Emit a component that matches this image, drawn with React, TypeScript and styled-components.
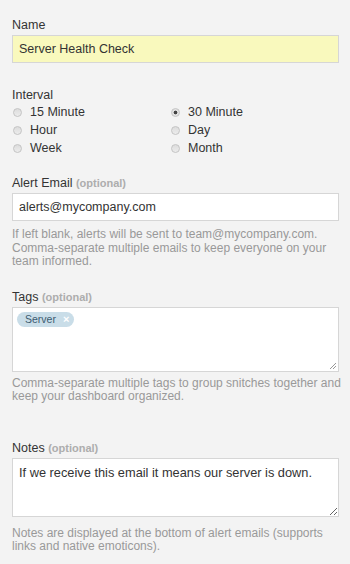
import React, { useState } from 'react';
import styled, { createGlobalStyle } from 'styled-components';

const GlobalStyle = createGlobalStyle`
html, body {
  margin: 0;
  padding: 0;
  background: #f3f3f3;
}
body {
  font-family: "Liberation Sans", Arial, sans-serif;
  color: #333;
}
`;

const intervals = ['15 Minute', '30 Minute', 'Hour', 'Day', 'Week', 'Month'];

const emailHelp = [
  'If left blank, alerts will be sent to team@mycompany.com.',
  'Comma-separate multiple emails to keep everyone on your',
  'team informed.',
];

const tagsHelp = [
  'Comma-separate multiple tags to group snitches together and',
  'keep your dashboard organized.',
];

const notesHelp = [
  'Notes are displayed at the bottom of alert emails (supports',
  'links and native emoticons).',
];

const HelpText = ({ lines, top }: { lines: string[]; top: number }) => (
  <Help $top={top}>
    {lines.map(line => (
      <HelpLine key={line}>{line}</HelpLine>
    ))}
  </Help>
);

export default function App() {
  const [interval, setInterval] = useState('30 Minute');
  const [tags, setTags] = useState(['Server']);

  return (
    <Page>
      <GlobalStyle />
      <Field>
        <Label>Name</Label>
        <TextInput $highlight defaultValue="Server Health Check" />
      </Field>

      <Field $gap={24}>
        <Label>Interval</Label>
        <RadioGrid>
          {intervals.map(name => (
            <RadioOption key={name} onClick={() => setInterval(name)}>
              <RadioDot $checked={interval === name} />
              {name}
            </RadioOption>
          ))}
        </RadioGrid>
      </Field>

      <Field $gap={18}>
        <Label>
          Alert Email <Optional>(optional)</Optional>
        </Label>
        <TextInput defaultValue="alerts@mycompany.com" />
        <HelpText lines={emailHelp} top={7} />
      </Field>

      <Field $gap={20}>
        <Label>
          Tags <Optional>(optional)</Optional>
        </Label>
        <TagBox $height={65}>
          {tags.map(tag => (
            <Tag key={tag}>
              {tag}
              <TagRemove onClick={() => setTags(tags.filter(t => t !== tag))}>×</TagRemove>
            </Tag>
          ))}
          <Grip />
        </TagBox>
        <HelpText lines={tagsHelp} top={5} />
      </Field>

      <Field $gap={36}>
        <Label>
          Notes <Optional>(optional)</Optional>
        </Label>
        <TextArea
          $height={59}
          defaultValue="If we receive this email it means our server is down."
        />
        <HelpText lines={notesHelp} top={10} />
      </Field>
    </Page>
  );
}

const Page = styled.div`
padding: 17px 11px 0 12px;
`;

const Field = styled.div<{ $gap?: number }>`
display: flex;
flex-direction: column;
margin-top: ${p => p.$gap || 0}px;
`;

const Label = styled.label`
font-size: 12.5px;
line-height: 16px;
color: #333;
margin-bottom: 2px;
`;

const Optional = styled.span`
font-size: 11px;
font-weight: bold;
color: #adadad;
`;

const TextInput = styled.input<{ $highlight?: boolean }>`
box-sizing: border-box;
height: 28px;
width: 100%;
margin: 0;
padding: 0 6px;
border: 1px solid #d6d6d6;
background: ${p => (p.$highlight ? '#f9f9bd' : '#fff')};
font-family: inherit;
font-size: 12.5px;
color: #333;
outline: none;
`;

const RadioGrid = styled.div`
display: grid;
grid-template-columns: 158px 1fr;
margin-top: -2px;
`;

const RadioOption = styled.div`
display: flex;
align-items: center;
height: 18px;
font-size: 12.5px;
color: #333;
padding-left: 1px;
cursor: pointer;
`;

const RadioDot = styled.span<{ $checked?: boolean }>`
box-sizing: border-box;
width: 9px;
height: 9px;
border-radius: 50%;
margin-right: 8px;
border: 1px solid #c4c4c4;
background: ${p =>
  p.$checked
    ? 'radial-gradient(circle, #444 0 1.6px, #e2e2e2 2.2px)'
    : 'linear-gradient(#dcdcdc, #ececec)'};
`;

const Help = styled.p<{ $top: number }>`
margin: ${p => p.$top}px 0 0;
font-size: 12px;
line-height: 13.5px;
color: #999;
`;

const HelpLine = styled.span`
display: block;
white-space: nowrap;
`;

const TagBox = styled.div<{ $height: number }>`
box-sizing: border-box;
position: relative;
height: ${p => p.$height}px;
background: #fff;
border: 1px solid #d6d6d6;
padding: 4px 4px;
display: flex;
align-items: flex-start;
gap: 4px;
`;

const Tag = styled.span`
display: inline-flex;
align-items: center;
height: 15px;
padding: 0 5px 0 8px;
border-radius: 8px;
background: #c9dde8;
color: #3b5b70;
font-size: 10.5px;
`;

const TagRemove = styled.span`
margin-left: 7px;
color: #fff;
font-weight: bold;
font-size: 11px;
cursor: pointer;
`;

const Grip = styled.span`
position: absolute;
right: 2px;
bottom: 2px;
width: 6px;
height: 6px;
background: linear-gradient(135deg, transparent 45%, #999 45%, #999 55%, transparent 55%, transparent 70%, #999 70%, #999 80%, transparent 80%);
`;

const TextArea = styled.textarea<{ $height: number }>`
box-sizing: border-box;
height: ${p => p.$height}px;
width: 100%;
margin: 0;
padding: 6px 6px;
border: 1px solid #d6d6d6;
background: #fff;
font-family: inherit;
font-size: 12.8px;
line-height: 16px;
color: #333;
outline: none;
resize: vertical;
`;
